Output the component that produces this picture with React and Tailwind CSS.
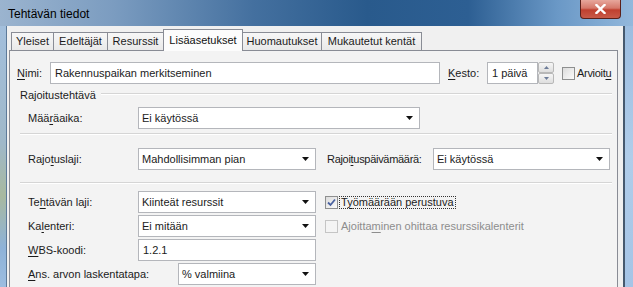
import React from "react";

const U = ({ children }) => <span className="underline underline-offset-[2px]">{children}</span>;

function Arrow() {
  return (
    <svg width="7" height="4" viewBox="0 0 7 4" className="shrink-0">
      <path d="M0 0H7L3.5 4Z" fill="#111" />
    </svg>
  );
}

function Combo({ w, value }) {
  return (
    <div
      className="h-[22px] flex items-center justify-between bg-white border border-[#b4b6bb] pl-[3px] pr-[6px] shrink-0"
      style={{ width: w }}
    >
      <span className="whitespace-nowrap">{value}</span>
      <Arrow />
    </div>
  );
}

function TextBox({ w, value }) {
  return (
    <div
      className="h-[22px] flex items-center bg-white border border-[#b4b6bb] pl-[4px] shrink-0"
      style={{ width: w }}
    >
      <span className="whitespace-nowrap">{value}</span>
    </div>
  );
}

function Check({ checked, disabled }) {
  return (
    <div
      className={
        "w-[13px] h-[13px] border shrink-0 flex items-center justify-center " +
        (disabled
          ? "border-[#c5c5c5] bg-[#f4f4f4]"
          : "border-[#8e8f8f] bg-[linear-gradient(135deg,#dcdcdc,#fbfbfb)]")
      }
    >
      {checked && (
        <svg width="9" height="9" viewBox="0 0 9 9">
          <path d="M1 4.5L3.5 7L8 1.5" stroke="#4a62a0" strokeWidth="1.8" fill="none" />
        </svg>
      )}
    </div>
  );
}

function Sep() {
  return (
    <div className="ml-[10px] mr-[5px] h-[2px] border-t border-[#d5d5d5] border-b border-b-white" />
  );
}

const tabs = [
  ["Yleiset", 43],
  ["Edeltäjät", 55],
  ["Resurssit", 57],
  ["Lisäasetukset", 80, true],
  ["Huomautukset", 80],
  ["Mukautetut kentät", 101],
];

export default function App() {
  return (
    <div className="w-[633px] h-[287px] overflow-hidden relative flex flex-col font-['Liberation_Sans',Arial,sans-serif] text-[11px] text-[#1b1b1b]">
      {/* title bar */}
      <div className="h-[26px] shrink-0 flex items-center pl-[8px] bg-[linear-gradient(90deg,#9bb4cf_0%,#7b9cc0_18%,#44709f_40%,#295a8c_58%,#2d5f93_74%,#6a98c6_88%,#93b8dc_100%)] relative">
        <span className="text-[12px] text-black pt-[2px]">Tehtävän tiedot</span>
        <div className="absolute top-0 right-[12px] w-[41px] h-[19px] rounded-b-[4px] border border-t-0 border-[#5b201a] bg-[linear-gradient(180deg,#e7a79c_0%,#d5786a_45%,#c0402f_55%,#c85a48_100%)] flex items-center justify-center">
          <svg width="11" height="10" viewBox="0 0 11 10">
            <path d="M1.5 1L9.5 9M9.5 1L1.5 9" stroke="#fff" strokeWidth="2.4" strokeLinecap="square" />
          </svg>
        </div>
      </div>

      <div className="flex flex-1 min-h-0">
        {/* left frame */}
        <div className="w-[7px] shrink-0 border-r border-[#5d7a99] bg-[linear-gradient(180deg,#a3bfdc_0%,#9fb8c9_45%,#a8b9a0_65%,#8eb2d8_85%,#9cbde0_100%)]" />
        {/* content */}
        <div className="flex-1 bg-[#f0f0f0] pt-[6px] pl-[2px] pr-[5px] overflow-hidden">
          {/* tabs */}
          <div className="h-[18px] flex items-start pl-[2px]">
            {tabs.map(([t, w, active], i) => (
              <div
                key={t}
                style={{ width: w }}
                className={
                  "shrink-0 border border-b-0 border-[#898c95] flex items-center justify-center whitespace-nowrap " +
                  (i > 0 ? "-ml-[1px] " : "") +
                  (active
                    ? "h-[22px] -mt-[3px] relative z-10 bg-[#fcfcfc] text-[#111]"
                    : "h-[18px] bg-[linear-gradient(180deg,#f7f7f7,#e9e9e9)]")
                }
              >
                {t}
              </div>
            ))}
          </div>
          {/* panel */}
          <div className="border border-[#898c95] bg-[#f3f3f3] h-[300px] pt-[11px]">
            {/* Nimi row */}
            <div className="flex items-center h-[22px] pl-[7px]">
              <span className="w-[33px] shrink-0">
                <U>N</U>imi:
              </span>
              <TextBox w={390} value="Rakennuspaikan merkitseminen" />
              <span className="ml-[8px] w-[39px] shrink-0">
                <U>K</U>esto:
              </span>
              <TextBox w={51} value="1 päivä" />
              <div className="w-[16px] h-[22px] flex flex-col shrink-0">
                <div className="h-[11px] border border-[#b8b8b8] rounded-[2px] bg-[linear-gradient(180deg,#f6f6f6,#dedede)] flex items-center justify-center">
                  <svg width="5" height="3" viewBox="0 0 5 3"><path d="M0 3H5L2.5 0Z" fill="#6d7c99" /></svg>
                </div>
                <div className="h-[11px] border border-[#b8b8b8] rounded-[2px] bg-[linear-gradient(180deg,#f6f6f6,#dedede)] flex items-center justify-center">
                  <svg width="5" height="3" viewBox="0 0 5 3"><path d="M0 0H5L2.5 3Z" fill="#6d7c99" /></svg>
                </div>
              </div>
              <div className="ml-[8px]">
                <Check />
              </div>
              <span className="ml-[2px] whitespace-nowrap tracking-[-0.3px]">
                Arvioit<U>u</U>
              </span>
            </div>

            {/* group header */}
            <div className="mt-[4px] h-[14px] flex items-center pl-[10px] pr-[5px]">
              <span className="whitespace-nowrap">Rajoitustehtävä</span>
              <div className="flex-1 ml-[5px] h-[2px] border-t border-[#d5d5d5] border-b border-b-white -mt-[3px]" />
            </div>

            {/* Määräaika */}
            <div className="mt-[5px] flex items-center h-[22px] pl-[18px]">
              <span className="w-[110px] shrink-0">
                Mää<U>r</U>äaika:
              </span>
              <Combo w={282} value="Ei käytössä" />
            </div>

            <div className="mt-[4px]">
              <Sep />
            </div>

            {/* Rajotuslaji */}
            <div className="mt-[13px] flex items-center h-[22px] pl-[18px]">
              <span className="w-[110px] shrink-0">
                Rajo<U>t</U>uslaji:
              </span>
              <Combo w={178} value="Mahdollisimman pian" />
              <span className="ml-[11px] w-[106px] shrink-0 whitespace-nowrap tracking-[-0.3px]">
                Rajoi<U>t</U>uspäivämäärä:
              </span>
              <Combo w={177} value="Ei käytössä" />
            </div>

            <div className="mt-[12px]">
              <Sep />
            </div>

            {/* lower block */}
            <div className="mt-[7px] flex flex-col gap-[2px] pl-[18px]">
              <div className="flex items-center h-[22px]">
                <span className="w-[110px] shrink-0">
                  Te<U>h</U>tävän laji:
                </span>
                <Combo w={178} value="Kiinteät resurssit" />
                <div className="ml-[9px]">
                  <Check checked />
                </div>
                <span className="ml-[1px] px-[1px] border border-dotted border-[#333] leading-[11px] whitespace-nowrap">
                  T<U>y</U>ömäärään perustuva
                </span>
              </div>
              <div className="flex items-center h-[22px]">
                <span className="w-[110px] shrink-0">
                  Ka<U>l</U>enteri:
                </span>
                <Combo w={178} value="Ei mitään" />
                <div className="ml-[9px]">
                  <Check disabled />
                </div>
                <span className="ml-[3px] text-[#8d8d8d] whitespace-nowrap">
                  Ajoitta<U>m</U>inen ohittaa resurssikalenterit
                </span>
              </div>
              <div className="flex items-center h-[22px]">
                <span className="w-[110px] shrink-0">
                  <U>W</U>BS-koodi:
                </span>
                <TextBox w={178} value="1.2.1" />
              </div>
              <div className="flex items-center h-[22px]">
                <span className="w-[150px] shrink-0 whitespace-nowrap">
                  <U>A</U>ns. arvon laskentatapa:
                </span>
                <Combo w={138} value="% valmiina" />
              </div>
            </div>
          </div>
        </div>
        {/* right frame */}
        <div className="w-[10px] shrink-0 border-l-2 border-[#46596e] bg-[linear-gradient(180deg,#9cbde0_0%,#b0cdea_50%,#a5c4e6_100%)]" />
      </div>
    </div>
  );
}
